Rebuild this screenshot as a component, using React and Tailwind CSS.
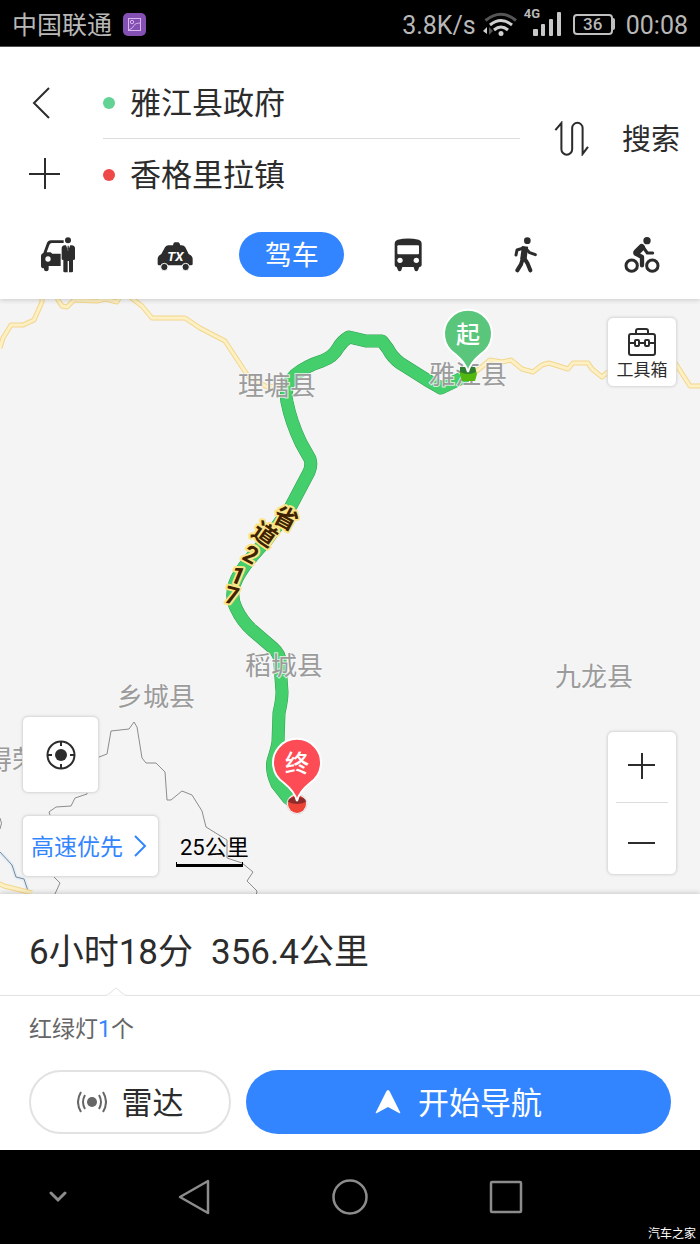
const places = [
  { name: "理塘县", x: 238, y: 395 },
  { name: "雅江县", x: 429, y: 384 },
  { name: "稻城县", x: 245, y: 675 },
  { name: "乡城县", x: 117, y: 706 },
  { name: "九龙县", x: 555, y: 686 },
  { name: "得荣", x: -14, y: 769 },
];

const roadLabel = [
  { char: "省", x: 286, y: 518, angle: 28 },
  { char: "道", x: 265, y: 534, angle: 35 },
  { char: "2", x: 251, y: 554, angle: 28 },
  { char: "1", x: 238, y: 575, angle: 22 },
  { char: "7", x: 232, y: 595, angle: 14 },
];

const roads = [
  "M0 348 L3 338 L11 325 L23 325 L34 320 L42 302 L42 290",
  "M56 292 L58 300 L62 306 L67 307 L74 300 L97 301 L106 299 L117 302 L121 294",
  "M126 294 L142 306 L152 318 L185 318 L200 328 L225 341 L248 376 L267 387 L287 385",
  "M470 376 L478 370 L490 360 L502 362 L511 360 L522 369 L533 372 L542 365 L549 363 L568 369 L573 363 L588 363 L592 369 L602 377 L608 372 L640 352 L674 361 L690 386 L704 386",
  "M-4 882 L4 886 L12 888 L32 893",
];

const borders = [
  "M50 815 L49 812 L56 807 L71 806 L75 798 L87 794 L90 770 L99 757 L107 754 L111 731 L129 729 L134 722 L137 727 L142 758 L146 763 L156 763 L165 772 L167 800 L171 800 L182 791 L192 795 L202 811 L206 827 L227 840 L227 858 L242 863 L253 872 L247 881 L257 891 L256 896",
  "M52 875 L60 883 L54 896",
  "M0 818 Q3 823 0 829",
];

const route =
  "M466 376 L441 388 L427 380 L400 363 Q392 357 388 349 L382 341 L366 341 L349 337 Q342 341 338 348 Q333 357 322 361 Q306 366 295 375 Q284 385 287 402 Q291 422 301 443 L310 459 Q312 465 309 472 L290 508 L267 540 Q248 560 240 573 Q228 592 236 608 Q242 621 252 630 L273 648 Q281 655 280 664 L282 692 Q282 700 279 713 L278 742 Q277 749 273 761 Q271 771 277 784 L288 798 L295 803";

function ValetIcon() {
  return (
    <svg viewBox="0 0 108 108" className="size-9" aria-hidden="true">
      <path
        fill="currentColor"
        d="M10 48 L20 20 Q24 10 33 10 H71 V18 H36 Q30 18 28 24 L20 46 H32 L37 50 H62 V87 H26 V97 Q26 103 19 103 Q12 103 12 97 V94 Q3 94 3 86 V58 Q3 50 10 48 Z"
      />
      <circle cx="24" cy="66" r="8" fill="#fff" />
      <circle cx="84" cy="10" r="9" fill="currentColor" />
      <path
        fill="currentColor"
        stroke="#fff"
        strokeWidth="3"
        paintOrder="stroke"
        d="M65 34 Q65 26 74 25 H95 Q105 26 105 34 V66 Q105 69 99 69 V103 Q99 106 95 106 H87 V72 H83 V106 H74 Q70 106 70 103 V69 Q65 69 65 66 Z"
      />
      <path fill="#fff" d="M78 24 H91 L84 42 Z" />
      <path fill="currentColor" d="M83 26 H86 L87 36 L84 42 L82 36 Z" />
    </svg>
  );
}

function TaxiIcon() {
  return (
    <svg viewBox="0 0 108 108" className="size-9" aria-hidden="true">
      <path
        fill="currentColor"
        d="M48 25 L50 18 Q51 16 54 16 H63 Q66 16 67 18 L70 25 H74 Q81 25 85 31 L95 51 Q107 57 107 66 V81 Q107 85 102 85 H6 Q2 85 2 81 V66 Q2 57 13 51 L24 31 Q28 25 34 25 Z"
      />
      <circle cx="22" cy="90" r="11" fill="currentColor" stroke="#fff" strokeWidth="3" />
      <circle cx="86" cy="90" r="11" fill="currentColor" stroke="#fff" strokeWidth="3" />
      <text x="55" y="71" textAnchor="middle" fill="#fff" className="text-[40px] font-bold italic">
        TX
      </text>
    </svg>
  );
}

function BusIcon() {
  return (
    <svg viewBox="0 0 108 108" className="size-9" aria-hidden="true">
      <path
        fill="currentColor"
        d="M14 20 Q14 11 23 8 Q54 1 86 8 Q95 11 95 20 V84 Q95 90 88 90 L84 100 Q83 103 79 103 Q75 103 74 100 L71 90 H37 L34 100 Q33 103 29 103 Q25 103 24 100 L20 90 Q14 90 14 84 Z"
      />
      <rect x="22" y="25" width="65" height="27" rx="3" fill="#fff" />
      <circle cx="30" cy="70" r="8" fill="#fff" />
      <circle cx="79" cy="70" r="8" fill="#fff" />
    </svg>
  );
}

function WalkIcon() {
  return (
    <svg viewBox="0 0 108 108" className="size-9" fill="none" stroke="currentColor" strokeLinecap="round" strokeLinejoin="round" aria-hidden="true">
      <circle cx="61" cy="11" r="10" fill="currentColor" stroke="none" />
      <path strokeWidth="9" d="M50 33 L30 39 L27 54 M58 36 L68 47 L85 53" />
      <path strokeWidth="19" strokeLinecap="butt" d="M54 28 L49 68" />
      <path strokeWidth="12" d="M47 66 L42 82 L31 100 M52 64 L62 80 L70 100" />
    </svg>
  );
}

function BikeIcon() {
  return (
    <svg viewBox="0 0 108 108" className="size-9" fill="none" stroke="currentColor" strokeLinecap="round" strokeLinejoin="round" aria-hidden="true">
      <circle cx="69" cy="11" r="11" fill="currentColor" stroke="none" />
      <circle cx="23" cy="86" r="17" strokeWidth="9" />
      <circle cx="85" cy="86" r="17" strokeWidth="9" />
      <path strokeWidth="20" d="M53 31 L38 46" />
      <path strokeWidth="9" d="M57 30 L70 48 H86" />
      <path strokeWidth="13" d="M35 50 L54 60 V85" />
    </svg>
  );
}

const modes = [
  { label: "代驾", Icon: ValetIcon },
  { label: "打车", Icon: TaxiIcon },
  { label: "驾车" },
  { label: "公交", Icon: BusIcon },
  { label: "步行", Icon: WalkIcon },
  { label: "骑行", Icon: BikeIcon },
];

function StatusBar() {
  return (
    <div className="flex h-[47px] items-center justify-between border-b border-[#555] bg-black px-3 pt-0.5 text-[25px] leading-8 text-[#b8b8b8]">
      <div className="flex items-center gap-[11px]">
        <span className="pt-1">中国联通</span>
        <svg viewBox="0 0 23 23" className="size-[23px]" aria-hidden="true">
          <rect width="23" height="23" rx="5" fill="#8450b4" />
          <g fill="none" stroke="#d9b8ee">
            <rect x="5.5" y="5.5" width="12" height="12" />
            <circle cx="9" cy="9" r="1.7" />
            <path d="M6 17 Q10 15 11 12.500 T18 10" />
          </g>
        </svg>
      </div>
      <div className="flex items-center">
        <span className="pt-1">3.8K/s</span>
        <svg viewBox="0 0 35 25" className="ml-[7px] h-[25px] w-[35px]" aria-hidden="true">
          <g fill="none" stroke="#d0d0d0" strokeWidth="3">
            <path stroke="#555" d="M2.500 8.500 Q18 -4 33 8.500" />
            <path d="M7 13 Q18 4 29 13" />
            <path d="M11 18 Q18 12 25 18" />
          </g>
          <circle cx="18" cy="21.500" r="2.500" fill="#d0d0d0" />
          <path fill="#d0d0d0" d="M0 19 L4 15 V22 Z" />
          <path fill="#555" d="M6 15 L10 19 L6 23 Z" />
        </svg>
        <div className="relative ml-[15px]">
          <svg viewBox="0 0 29 25" className="h-[25px] w-[29px]" aria-hidden="true">
            <g fill="#c8c8c8">
              <rect x="0" y="17" width="5" height="7" rx="1" />
              <rect x="8" y="12" width="4" height="12" rx="1" />
              <rect x="16" y="7" width="4" height="17" rx="1" />
              <rect x="24" y="0" width="4" height="24" rx="1" />
            </g>
          </svg>
          <span className="absolute -top-1 -left-[9px] text-[13px] leading-3 font-bold">4G</span>
        </div>
        <div className="ml-[11px] flex items-center">
          <span className="flex h-[21px] w-10 items-center justify-center rounded border-2 border-[#c0c0c0] text-[17px] leading-4 font-medium">36</span>
          <span className="h-3 w-0.5 rounded-r bg-[#c0c0c0]" />
        </div>
        <span className="ml-[11px] pt-1">00:08</span>
      </div>
    </div>
  );
}

function SearchHeader() {
  return (
    <header className="relative z-10 bg-white shadow-[0_1px_5px_rgba(0,0,0,0.18)]">
      <form className="flex items-center pt-5 pr-5">
        <div className="flex w-[103px] shrink-0 flex-col pl-[29px]">
          <button type="button" aria-label="返回" className="flex h-[71px] items-center">
            <svg viewBox="0 0 32 32" className="size-8" fill="none" stroke="currentColor" strokeWidth="2" aria-hidden="true">
              <path d="M20 1 L5 16 L20 31" />
            </svg>
          </button>
          <button type="button" aria-label="添加途经点" className="flex h-[72px] items-center">
            <svg viewBox="0 0 32 32" className="size-8" fill="none" stroke="currentColor" strokeWidth="2" aria-hidden="true">
              <path d="M0 16 H31 M16 0 V31" />
            </svg>
          </button>
        </div>
        <div className="min-w-0 flex-1 text-[31px]">
          <label className="flex h-[72px] items-center gap-[15px] border-b border-[#dcdcdc]">
            <span className="size-3 shrink-0 rounded-full bg-[#62d394]" />
            <input aria-label="起点" defaultValue="雅江县政府" className="w-full min-w-0 pt-1 outline-none" />
          </label>
          <label className="flex h-[71px] items-center gap-[15px]">
            <span className="size-3 shrink-0 rounded-full bg-[#ee4848]" />
            <input aria-label="终点" defaultValue="香格里拉镇" className="w-full min-w-0 pt-1 outline-none" />
          </label>
        </div>
        <button type="button" aria-label="交换起终点" className="ml-[34px]">
          <svg viewBox="0 0 104 104" className="size-[35px]" fill="none" stroke="currentColor" strokeWidth="6" aria-hidden="true">
            <path d="M4 27 L22 6 V84 A16 16 0 0 0 54 84 V21 A15.500 15.500 0 0 1 85 21 V98 L101 77" />
          </svg>
        </button>
        <button type="submit" className="ml-[33px] pt-1 text-[29px]">搜索</button>
      </form>
      <div role="tablist" className="grid h-[89px] grid-cols-6 items-center justify-items-center">
        {modes.map(({ label, Icon }) =>
          Icon ? (
            <button key={label} type="button" role="tab" aria-label={label} aria-selected="false">
              <Icon />
            </button>
          ) : (
            <button key={label} type="button" role="tab" aria-selected="true" className="h-[45px] w-[105px] rounded-full bg-[#3385ff] pt-1 text-[27px] text-white">
              {label}
            </button>
          )
        )}
      </div>
    </header>
  );
}

function Pin({ x, y, color, char }) {
  return (
    <g transform={`translate(${x} ${y})`}>
      <path
        fill={color}
        stroke="#fff"
        strokeWidth="2"
        d="M0 38 Q-2 29 -13 20 A24 24 0 1 1 13 20 Q2 29 0 38 Z"
      />
      <text y="9" textAnchor="middle" fill="#fff" className="text-[24px] font-medium">{char}</text>
    </g>
  );
}

function MapCanvas() {
  return (
    <svg viewBox="0 299 700 595" preserveAspectRatio="xMidYMid slice" className="absolute inset-0 h-full w-full" role="img" aria-label="路线地图">
      <g fill="none" strokeLinejoin="round">
        <path d="M0 852 L12 865 L16 877 L24 879 L29 894" stroke="#e2eef7" strokeWidth="4" />
        <path d="M0 852 L12 865 L16 877 L24 879 L29 894" stroke="#7d8794" />
        {borders.map((d) => (
          <path key={d} d={d} stroke="#8c8c8c" />
        ))}
        {roads.map((d) => (
          <path key={d} d={d} stroke="#f3d68c" strokeWidth="5" />
        ))}
        {roads.map((d) => (
          <path key={d} d={d} stroke="#fdf0c4" strokeWidth="3" />
        ))}
        <path d={route} stroke="#2f9f52" strokeWidth="13" />
        <path d={route} stroke="#45cf6c" strokeWidth="12" />
      </g>

      <g fill="#9b9b9b" stroke="#f8f8f8" strokeWidth="2" strokeOpacity="0.8" paintOrder="stroke" className="text-[26px]">
        {places.map(({ name, x, y }) => (
          <text key={name} x={x} y={y}>{name}</text>
        ))}
      </g>

      <g fill="#3f2200" stroke="#fbe588" strokeWidth="4" strokeLinejoin="round" paintOrder="stroke" textAnchor="middle" className="text-[24px] font-bold">
        {roadLabel.map(({ char, x, y, angle }) => (
          <text key={char} transform={`translate(${x} ${y}) rotate(${angle})`} y="9">{char}</text>
        ))}
      </g>

      <path d="M460 367 H475 L477 374 L475 381 H462 L460 375 Z" fill="#52b810" />
      <path d="M460 367 H475 L476 372 Q468 376 460 372 Z" fill="#2e7d32" />
      <Pin x={468} y={334} color="#5ac67c" char="起" />

      <circle cx="297" cy="804" r="10" fill="#fff" stroke="#ddd" />
      <circle cx="297" cy="804" r="9" fill="#ee4438" />
      <path d="M288 802 Q288 797 297 797 Q306 797 306 802 Q297 806 288 802 Z" fill="#8e2c2c" />
      <Pin x={297} y={763} color="#fd4c55" char="终" />
    </svg>
  );
}

function MapControls() {
  const card = "rounded-md border border-[#dedede] bg-white shadow-[0_0_3px_rgba(0,0,0,0.12)]";
  return (
    <>
      <button type="button" className={`${card} absolute top-[18px] right-[23px] flex size-[70px] flex-col items-center justify-center gap-1 pt-1`}>
        <svg viewBox="0 0 28 28" className="size-7" fill="none" stroke="currentColor" strokeWidth="2" aria-hidden="true">
          <rect x="1" y="6" width="26" height="21" rx="2" />
          <path d="M8 6 V3 Q8 1 10 1 H18 Q20 1 20 3 V6 M1 15 H7 M11 15 H17 M21 15 H27" />
          <rect x="7" y="12" width="4" height="6" rx="1" />
          <rect x="17" y="12" width="4" height="6" rx="1" />
        </svg>
        <span className="text-[17px] leading-5">工具箱</span>
      </button>

      <div className="absolute bottom-[17px] left-[22px] flex flex-col items-start gap-[22px]">
        <button type="button" aria-label="定位" className={`${card} flex size-[77px] items-center justify-center`}>
          <svg viewBox="0 0 30 30" className="size-[30px]" fill="none" stroke="currentColor" strokeWidth="2" aria-hidden="true">
            <circle cx="15" cy="15" r="13.500" />
            <circle cx="15" cy="15" r="6" fill="currentColor" stroke="none" />
            <path d="M15 1 V6 M15 24 V29 M1 15 H6 M24 15 H29" />
          </svg>
        </button>
        <div className="flex items-end gap-[17px]">
          <button type="button" className={`${card} flex h-[62px] w-[137px] items-center justify-between px-2 pr-[10px] text-[23px] text-[#3385ff]`}>
            <span className="pt-1">高速优先</span>
            <svg viewBox="0 0 16 24" className="h-6 w-4" fill="none" stroke="currentColor" strokeWidth="2" aria-hidden="true">
              <path d="M3 2 L13 12 L3 22" />
            </svg>
          </button>
          <div className="flex flex-col pb-[10px] text-black">
            <span className="pl-1 text-[22px] leading-7">25公里</span>
            <span className="h-[5px] w-[67px] border-x border-b-3 border-black" />
          </div>
        </div>
      </div>

      <div className={`${card} absolute right-[23px] bottom-[19px] flex w-[70px] flex-col px-2`}>
        <button type="button" aria-label="放大" className="flex h-[71px] items-center justify-center border-b border-[#dcdcdc]">
          <svg viewBox="0 0 28 28" className="size-7" stroke="currentColor" strokeWidth="2" aria-hidden="true">
            <path d="M0 12 H27 M14 -1 V26" />
          </svg>
        </button>
        <button type="button" aria-label="缩小" className="flex h-[71px] items-center justify-center">
          <svg viewBox="0 0 28 28" className="size-7" stroke="currentColor" strokeWidth="2" aria-hidden="true">
            <path d="M0 18 H27" />
          </svg>
        </button>
      </div>
    </>
  );
}

function RoutePanel() {
  return (
    <section className="relative z-10 bg-white shadow-[0_-1px_5px_rgba(0,0,0,0.18)]">
      <div className="relative flex h-[102px] items-center gap-[18px] border-b border-[#e2e2e2] px-[29px] pt-[18px] text-[35px]">
        <span>6小时18分</span>
        <span>356.4公里</span>
        <svg viewBox="0 0 22 9" className="absolute -bottom-px left-[105px] h-[9px] w-[22px]" aria-hidden="true">
          <path d="M0 8.500 Q3 8.500 5 6 L11 1 L17 6 Q19 8.500 22 8.500" fill="#fff" stroke="#e2e2e2" />
          <path d="M2 9 H20" stroke="#fff" />
        </svg>
      </div>
      <p className="h-[74px] px-[29px] pt-[17px] text-[23px] leading-[34px] text-[#666]">
        红绿灯<span className="text-[#3385ff]">1</span>个
      </p>
      <div className="flex gap-[15px] px-[29px] pb-4 text-[31px]">
        <button type="button" className="flex h-16 w-[202px] shrink-0 items-center justify-center gap-[15px] rounded-full border-2 border-[#e2e2e2]">
          <svg viewBox="0 0 30 24" className="h-6 w-[30px]" fill="none" stroke="#666" strokeWidth="2" aria-hidden="true">
            <circle cx="15" cy="12" r="5" fill="#666" stroke="none" />
            <path d="M8 5 Q4 12 8 19 M22 5 Q26 12 22 19 M4 2 Q-2 12 4 22 M26 2 Q32 12 26 22" />
          </svg>
          <span className="pt-1">雷达</span>
        </button>
        <button type="button" className="flex h-16 flex-1 items-center justify-center gap-[17px] rounded-full bg-[#3385ff] text-white">
          <svg viewBox="0 0 26 24" className="h-6 w-[26px]" fill="currentColor" aria-hidden="true">
            <path d="M13 0 Q14 0 15 2 L25 22 Q26 24 24 23 L13 17 L2 23 Q0 24 1 22 L11 2 Q12 0 13 0 Z" />
          </svg>
          <span className="pt-1">开始导航</span>
        </button>
      </div>
    </section>
  );
}

function SystemNav() {
  return (
    <nav className="relative z-10 grid h-[94px] grid-cols-[116fr_156fr_156fr_156fr_116fr] items-center justify-items-center bg-black text-[#8c8c8c]">
      <button type="button" aria-label="收起">
        <svg viewBox="0 0 18 12" className="h-3 w-[18px]" fill="none" stroke="currentColor" strokeWidth="3" strokeLinecap="round" aria-hidden="true">
          <path d="M2 2 L9 9 L16 2" />
        </svg>
      </button>
      <button type="button" aria-label="后退">
        <svg viewBox="0 0 36 36" className="size-9" fill="none" stroke="currentColor" strokeWidth="2.500" strokeLinejoin="round" aria-hidden="true">
          <path d="M4 18 L32 2 V34 Z" />
        </svg>
      </button>
      <button type="button" aria-label="主页">
        <svg viewBox="0 0 36 36" className="size-9" fill="none" stroke="currentColor" strokeWidth="2.500" aria-hidden="true">
          <circle cx="18" cy="18" r="16.500" />
        </svg>
      </button>
      <button type="button" aria-label="最近任务">
        <svg viewBox="0 0 36 36" className="size-9" fill="none" stroke="currentColor" strokeWidth="2.500" aria-hidden="true">
          <rect x="3" y="3" width="30" height="30" rx="1" />
        </svg>
      </button>
      <span className="absolute right-1 bottom-0.5 text-xs text-white">汽车之家</span>
    </nav>
  );
}

export default function App() {
  return (
    <div className="flex min-h-screen flex-col bg-white font-[Roboto,'Noto_Sans_CJK_SC',sans-serif] text-[#2c2c2c]">
      <StatusBar />
      <SearchHeader />
      <main className="relative min-h-96 flex-1 overflow-hidden bg-[#f4f4f4]">
        <MapCanvas />
        <MapControls />
      </main>
      <RoutePanel />
      <SystemNav />
    </div>
  );
}
